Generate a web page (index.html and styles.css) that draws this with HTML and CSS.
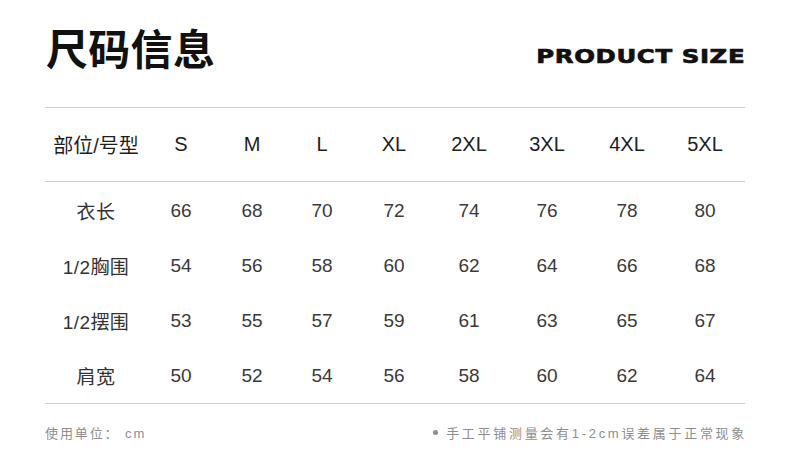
FILE: index.html
```html
<!DOCTYPE html>
<html lang="zh">
<head>
<meta charset="utf-8">
<link rel="stylesheet" href="styles.css">
</head>
<body>
<div class="page">
  <header class="head">
    <h1 class="title">尺码信息</h1>
    <div class="sub">PRODUCT SIZE</div>
  </header>
  <div class="table">
    <div class="row row-head">
      <div class="cell label">部位/号型</div>
      <div class="cell">S</div><div class="cell">M</div><div class="cell">L</div><div class="cell">XL</div>
      <div class="cell">2XL</div><div class="cell">3XL</div><div class="cell">4XL</div><div class="cell">5XL</div>
    </div>
    <div class="body">
      <div class="row">
        <div class="cell label">衣长</div>
        <div class="cell">66</div><div class="cell">68</div><div class="cell">70</div><div class="cell">72</div>
        <div class="cell">74</div><div class="cell">76</div><div class="cell">78</div><div class="cell">80</div>
      </div>
      <div class="row">
        <div class="cell label">1/2胸围</div>
        <div class="cell">54</div><div class="cell">56</div><div class="cell">58</div><div class="cell">60</div>
        <div class="cell">62</div><div class="cell">64</div><div class="cell">66</div><div class="cell">68</div>
      </div>
      <div class="row">
        <div class="cell label">1/2摆围</div>
        <div class="cell">53</div><div class="cell">55</div><div class="cell">57</div><div class="cell">59</div>
        <div class="cell">61</div><div class="cell">63</div><div class="cell">65</div><div class="cell">67</div>
      </div>
      <div class="row">
        <div class="cell label">肩宽</div>
        <div class="cell">50</div><div class="cell">52</div><div class="cell">54</div><div class="cell">56</div>
        <div class="cell">58</div><div class="cell">60</div><div class="cell">62</div><div class="cell">64</div>
      </div>
    </div>
  </div>
  <footer class="foot">
    <span class="unit">使用单位： cm</span>
    <span class="note"><span class="dot"></span>手工平铺测量会有1-2cm误差属于正常现象</span>
  </footer>
</div>
</body>
</html>
```
FILE: styles.css
```css
html, body {
  margin: 0;
  padding: 0;
  background: #fff;
}
body {
  font-family: "Liberation Sans", "Noto Sans CJK SC", sans-serif;
  color: #222;
}
.page {
  width: 700px;
  padding: 0 45px;
}
.head {
  height: 107px;
  display: flex;
  justify-content: space-between;
  align-items: flex-start;
  border-bottom: 1px solid #cfcfcf;
}
.title {
  margin: 0;
  padding-top: 19px;
  padding-left: 1px;
  font-family: "Noto Sans CJK SC", sans-serif;
  font-size: 42px;
  line-height: 56px;
  font-weight: 700;
  letter-spacing: 0.3px;
  color: #111;
}
.sub {
  margin-top: 44px;
  font-family: "DejaVu Sans", sans-serif;
  font-weight: 700;
  font-size: 20px;
  line-height: 24px;
  letter-spacing: 0.5px;
  color: #111;
  -webkit-text-stroke: 0.7px #111;
  transform: scaleX(1.22);
  transform-origin: right center;
}
.table {
  border-bottom: 1px solid #cfcfcf;
}
.row {
  display: grid;
  grid-template-columns: 102px 68px 74px 66px 78px 72px 84px 76px 80px;
  align-items: center;
  justify-items: center;
  height: 55px;
  font-size: 19px;
  color: #3a3a3a;
}
.row-head {
  height: 73px;
  border-bottom: 1px solid #cfcfcf;
  font-size: 20px;
  color: #1e1e1e;
}
.body {
  padding-top: 1px;
}
.cell {
  white-space: nowrap;
}
.body .label {
  font-size: 19px;
  letter-spacing: 0.4px;
  color: #333;
}
.foot {
  display: flex;
  justify-content: space-between;
  align-items: center;
  height: 56px;
  font-size: 13px;
  color: #8e8e8e;
}
.unit {
  letter-spacing: 1.9px;
}
.note {
  display: flex;
  align-items: center;
  letter-spacing: 2.7px;
  margin-right: -2px;
}
.dot {
  width: 5px;
  height: 5px;
  border-radius: 50%;
  background: #8e8e8e;
  margin-right: 8px;
}
```
